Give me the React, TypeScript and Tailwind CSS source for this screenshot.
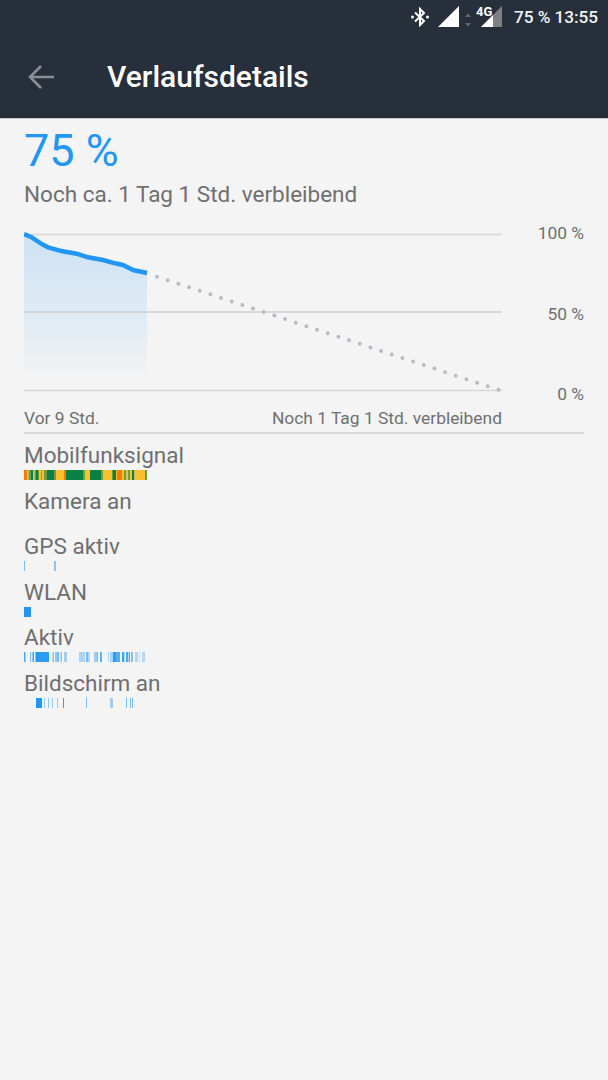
const G = "#0b8043";
const Y = "#fbc02d";
const O = "#f57c00";
const L = "#6f9f3a";

const mobile: [number, number, string][] = [
  [0, 3, O], [3, 1.5, Y], [4.5, 2.5, L], [7, 2, G], [9, 1.5, Y], [10.5, 1.5, L], [12, 2, G], [14, 1, L], [15, 2, Y], [17, 1.5, O],
  [18.5, 1.5, Y], [20, 3, L], [23, 7, G], [30, 2, L], [32, 1, Y], [33, 7, Y], [40, 2, O], [42, 17, G], [59, 2, L],
  [61, 5, Y], [66, 11, G], [77, 2, L], [79, 9, Y], [88, 1, L], [89, 3, G], [92, 1, Y], [93, 5, O], [98, 2, Y],
  [100, 2.5, L], [102.5, 1.5, Y], [104, 2, L], [106, 2, Y], [108, 2.5, G], [110.5, 10.5, Y], [121, 2, L],
];

const gps: [number, number, number][] = [[0, 1, 0.6], [30, 2, 0.5]];
const wlan: [number, number, number][] = [[0, 7, 1]];
const aktiv: [number, number, number][] = [
  [0, 1.5, 0.8], [6, 1, 0.6], [8.5, 1.5, 0.9], [11.5, 2.5, 1], [14, 11, 0.95], [28.5, 1.5, 0.55], [31, 2, 0.45], [33, 2, 0.6],
  [36.5, 1.5, 0.5], [40, 3, 0.4], [55, 6, 0.35], [62, 2, 0.6], [64, 1.7, 0.35], [70, 3, 0.4], [73, 1, 0.6], [76, 2, 0.7],
  [84, 1, 0.35], [86, 3, 0.35], [89, 3, 0.95], [92, 4, 0.75], [98, 2, 0.85], [100, 1, 0.3], [102, 2, 0.8], [104, 1, 0.3],
  [105, 1, 0.8], [107, 2, 0.55], [111, 3, 0.3], [115, 1, 0.25], [118, 3, 0.3],
];
const screen: [number, number, number][] = [
  [12, 6, 1], [20, 1, 0.45], [24, 1, 0.45], [28, 1, 0.45], [33, 1, 0.45], [39, 1, 0.9],
  [62, 1, 0.6], [86, 3, 0.4], [102, 1, 0.6], [106, 1, 0.6], [108, 1, 0.6],
];

function TimelineBar({ items }: { items: [number, number, number][] }) {
  return (
    <svg width="130" height="10" className="block">
      {items.map(([x, w, o], i) => (
        <rect key={i} x={x} y="0" width={w} height="10" fill="#2196f3" opacity={o} />
      ))}
    </svg>
  );
}

function Row({ label, children }: { label: string; children?: React.ReactNode }) {
  return (
    <div className="h-[45.6px]">
      <div className="h-[26px] text-[22.5px] leading-[22px] text-[#6f6f6f]">{label}</div>
      <div className="h-[10px]">{children}</div>
    </div>
  );
}

const curve = "M0 10 L7.7 13.3 L17.7 20 L24 23.3 L36 26.7 L52.7 29.7 L64 33.3 L79 36 L91 39.3 L99 41 L109 46 L123 49";

function Chart() {
  return (
    <svg width="478" height="170" className="block">
      <defs>
        <linearGradient id="area" x1="0" y1="0" x2="0" y2="1">
          <stop offset="0" stopColor="#2196f3" stopOpacity="0.19" />
          <stop offset="0.55" stopColor="#2196f3" stopOpacity="0.1" />
          <stop offset="1" stopColor="#2196f3" stopOpacity="0" />
        </linearGradient>
      </defs>
      <line x1="0" y1="10.5" x2="478" y2="10.5" stroke="#d6d6d6" strokeWidth="1.5" />
      <path d={`${curve} V158 H0 Z`} fill="url(#area)" />
      <line x1="0" y1="88" x2="478" y2="88" stroke="#cfcfcf" strokeWidth="1.5" />
      <line x1="0" y1="166.5" x2="478" y2="166.5" stroke="#d6d6d6" strokeWidth="1.5" />
      <path d={curve} fill="none" stroke="#2196f3" strokeWidth="4.5" strokeLinejoin="round" />
      <line x1="133" y1="52.7" x2="478" y2="167" stroke="#b8bcc0" strokeWidth="4" strokeLinecap="round" strokeDasharray="0 11.24" />
    </svg>
  );
}

export default function App() {
  return (
    <div className="min-h-[1080px] bg-[#f4f4f4] font-['Roboto',sans-serif]">
      <div className="h-[119px] bg-[#272f3a] border-b border-[#c9c9c9]">
        <div className="flex h-9 items-center justify-end pr-[10px] text-white">
          <svg width="20" height="20" viewBox="0 0 20 20" fill="none" stroke="#fff" strokeWidth="2" className="mr-[8px] mb-[2px]">
            <path d="M5 5.5 L14 14 L10 18 V2 L14 6 L5 14.5" />
            <circle cx="2.5" cy="10" r="1.5" fill="#fff" stroke="none" />
            <circle cx="17.5" cy="10" r="1.5" fill="#fff" stroke="none" />
          </svg>
          <svg width="21" height="21" viewBox="0 0 21 21" className="mr-[5px] mb-[3px]">
            <path d="M0 21 L21 0 V21 Z" fill="#fff" />
          </svg>
          <svg width="8" height="20" viewBox="0 0 8 20" className="mr-[9px]">
            <path d="M4 5 L7 9 H1 Z M4 19 L1 15 H7 Z" fill="#5d646d" />
          </svg>
          <div className="relative mr-[12px] mb-[3px] h-[21px] w-[21px]">
            <svg width="21" height="21" viewBox="0 0 21 21" className="absolute left-0 top-0">
              <path d="M0 21 L21 0 V21 Z" fill="#7d7f83" />
              <path d="M0 21 L12 9 V21 Z" fill="#fff" />
            </svg>
            <span className="absolute -left-[5px] -top-[1px] text-[13px] font-bold leading-[14px]">4G</span>
          </div>
          <span className="mr-[4px] text-[17.2px] font-medium text-[#f2f3f4]">75 %</span>
          <span className="text-[17.2px] font-medium text-[#f2f3f4]">13:55</span>
        </div>
        <div className="flex h-[82px] items-center">
          <svg width="28" height="28" viewBox="0 0 28 28" fill="none" stroke="#8b8f94" strokeWidth="2.6" className="ml-[27px] mr-[52px]">
            <path d="M27 14 H4 M14 3 L3 14 L14 25" />
          </svg>
          <h1 className="text-[30px] font-medium leading-none text-white">Verlaufsdetails</h1>
        </div>
      </div>

      <div className="px-6">
        <div className="mt-[6px] text-[45px] leading-[52px] text-[#2196f3]">75 %</div>
        <div className="mt-[4px] text-[22.5px] leading-[26px] text-[#6f6f6f]">Noch ca. 1 Tag 1 Std. verbleibend</div>

        <div className="mt-[17px] flex">
          <Chart />
          <div className="-mt-[1px] flex h-[181px] flex-1 flex-col items-end justify-between text-[17.4px] leading-5 text-[#6f6f6f]">
            <span>100 %</span>
            <span>50 %</span>
            <span>0 %</span>
          </div>
        </div>

        <div className="mt-[4px] flex w-[478px] justify-between text-[17.4px] leading-5 text-[#6f6f6f]">
          <span>Vor 9 Std.</span>
          <span>Noch 1 Tag 1 Std. verbleibend</span>
        </div>

        <div className="mt-[4px] h-[2px] bg-[#d8d8d8]" />

        <div className="mt-[10px]">
          <Row label="Mobilfunksignal">
            <svg width="123" height="10" className="block">
              {mobile.map(([x, w, c], i) => (
                <rect key={i} x={x} y="0" width={w} height="10" fill={c} />
              ))}
            </svg>
          </Row>
          <Row label="Kamera an" />
          <Row label="GPS aktiv">
            <TimelineBar items={gps} />
          </Row>
          <Row label="WLAN">
            <TimelineBar items={wlan} />
          </Row>
          <Row label="Aktiv">
            <TimelineBar items={aktiv} />
          </Row>
          <Row label="Bildschirm an">
            <TimelineBar items={screen} />
          </Row>
        </div>
      </div>
    </div>
  );
}
